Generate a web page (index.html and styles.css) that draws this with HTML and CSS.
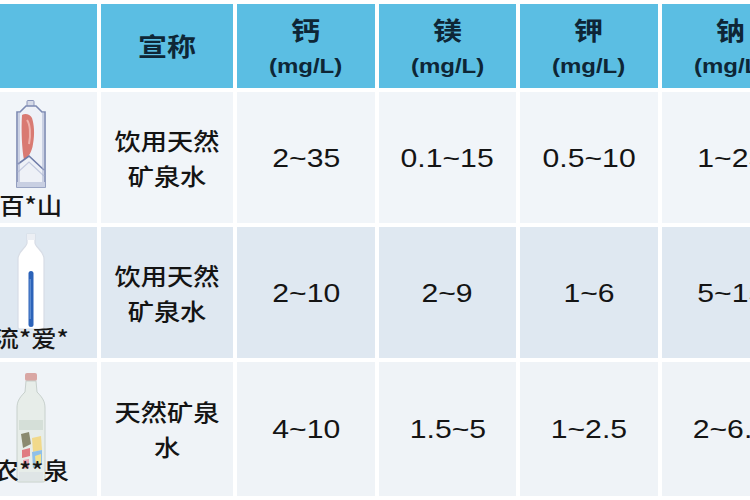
FILE: index.html
```html
<!DOCTYPE html>
<html lang="zh">
<head>
<meta charset="utf-8">
<title>矿泉水对比</title>
<link rel="stylesheet" href="styles.css">
</head>
<body>
<div class="table">
  <div class="cell head"></div>
  <div class="cell head"><span class="t h-main">宣称</span></div>
  <div class="cell head"><span class="t h-main">钙</span><span class="t h-unit">(mg/L)</span></div>
  <div class="cell head"><span class="t h-main">镁</span><span class="t h-unit">(mg/L)</span></div>
  <div class="cell head"><span class="t h-main">钾</span><span class="t h-unit">(mg/L)</span></div>
  <div class="cell head"><span class="t h-main">钠</span><span class="t h-unit">(mg/L)</span></div>

  <div class="cell brand r1 b1">
    <svg class="bottle" width="32" height="88" viewBox="0 0 32 88">
      <rect x="12" y="0.5" width="7" height="6" rx="1" fill="#d6dbe8" stroke="#8c96ba"/>
      <path d="M11 6 L5 12 L2 12 L2 87 L30 87 L30 12 L27 12 L21 6 Z" fill="#eef1f7" stroke="#7d8ab2" stroke-width="1.6"/>
      <path d="M7 15 C10 13 15 14 17 18 C19 24 20 34 18 44 C17 52 13 58 9 60 C7 50 6 30 7 15 Z" fill="#d97a72"/>
      <path d="M12 20 C15 24 16 34 14 44" stroke="#efb3ad" stroke-width="2" fill="none"/>
      <path d="M3 64 L14 56 L29 70" stroke="#6f7ca8" stroke-width="1.6" fill="none"/>
      <path d="M3 72 L14 62 L29 76" stroke="#c3cadf" stroke-width="1.2" fill="none"/>
      <path d="M4 12 L4 86 M28 12 L28 86" stroke="#a7b0cf" stroke-width="1" fill="none"/>
      <rect x="2" y="82" width="28" height="5" fill="#c8cfe2"/>
    </svg>
    <span class="t label">百*山</span>
  </div>
  <div class="cell body r1"><span class="t txt">饮用天然<br>矿泉水</span></div>
  <div class="cell body r1"><span class="t num">2~35</span></div>
  <div class="cell body r1"><span class="t num">0.1~15</span></div>
  <div class="cell body r1"><span class="t num">0.5~10</span></div>
  <div class="cell body r1"><span class="t num">1~25</span></div>

  <div class="cell brand r2 b2">
    <svg class="bottle" width="28" height="97" viewBox="0 0 28 97">
      <path d="M10 1 L18 1 L18 10 C18 14 27 18 27 26 L27 94 C27 96 26 96 24 96 L4 96 C2 96 1 96 1 94 L1 26 C1 18 10 14 10 10 Z" fill="#ffffff" stroke="#d8dde6" stroke-width="1.2"/>
      <rect x="10" y="1" width="8" height="6" fill="#eceff4"/>
      <rect x="11.5" y="38" width="5" height="56" rx="2.5" fill="#2c63b9"/>
      <rect x="12.5" y="46" width="1.5" height="40" fill="#5a8ad0"/>
    </svg>
    <span class="t label">流*爱*</span>
  </div>
  <div class="cell body r2"><span class="t txt">饮用天然<br>矿泉水</span></div>
  <div class="cell body r2"><span class="t num">2~10</span></div>
  <div class="cell body r2"><span class="t num">2~9</span></div>
  <div class="cell body r2"><span class="t num">1~6</span></div>
  <div class="cell body r2"><span class="t num">5~15</span></div>

  <div class="cell brand r3 b3">
    <svg class="bottle" width="32" height="111" viewBox="0 0 32 111">
      <rect x="10" y="1" width="12" height="8" rx="2" fill="#d9a7a4"/>
      <path d="M11 9 L21 9 L22 20 C28 26 30 30 30 36 L30 108 C30 110 29 110 27 110 L5 110 C3 110 2 110 2 108 L2 36 C2 30 4 26 10 20 Z" fill="#e7ede9" stroke="#c7d0cc" stroke-width="1"/>
      <rect x="4" y="48" width="24" height="10" fill="#d5dfd8"/>
      <path d="M6 62 L14 60 L16 72 L8 76 Z" fill="#8b8a70"/>
      <path d="M7 78 L15 76 L15 84 L7 86 Z" fill="#e07c82"/>
      <path d="M8 88 L14 87 L14 96 L8 97 Z" fill="#eaa0b0"/>
      <path d="M17 66 L26 64 L27 78 L18 80 Z" fill="#f1d98a"/>
      <path d="M17 80 L27 78 L27 92 L18 96 Z" fill="#8fc0e8"/>
      <path d="M20 84 L26 82 L26 92 L21 94 Z" fill="#f3e28c"/>
      <rect x="4" y="100" width="24" height="9" fill="#dfe5e6"/>
    </svg>
    <span class="t label">农**泉</span>
  </div>
  <div class="cell body r3"><span class="t txt">天然矿泉<br>水</span></div>
  <div class="cell body r3"><span class="t num">4~10</span></div>
  <div class="cell body r3"><span class="t num">1.5~5</span></div>
  <div class="cell body r3"><span class="t num">1~2.5</span></div>
  <div class="cell body r3"><span class="t num">2~6.5</span></div>
</div>
</body>
</html>
```

FILE: styles.css
```css
html, body {
  margin: 0;
  padding: 0;
  background: #ffffff;
  overflow: hidden;
  width: 750px;
  height: 500px;
}

.table {
  display: grid;
  grid-template-columns: 132px 132px 138px 137px 138px 138px;
  grid-template-rows: 84px 131px 131px 134px;
  gap: 4px;
  margin-left: -35px;
  padding-top: 4px;
  width: max-content;
  font-family: "Liberation Sans", "Noto Sans CJK SC", sans-serif;
}

.cell {
  display: flex;
  flex-direction: column;
  align-items: center;
  justify-content: center;
  overflow: hidden;
}

.t {
  display: inline-block;
  transform: scaleX(1.16);
  white-space: nowrap;
}

.head {
  background: #5bbee3;
  color: #0e2636;
  font-weight: bold;
  padding-top: 2px;
  box-sizing: border-box;
}

.h-main {
  font-size: 25px;
  line-height: 38px;
}

.h-unit {
  font-size: 20px;
  line-height: 32px;
  transform: scaleX(1.2);
}

.r1 { background: #f1f5f9; }
.r2 { background: #dfe8f1; }
.r3 { background: #eff3f7; }

.body {
  color: #141414;
}

.txt {
  font-size: 23px;
  line-height: 35px;
  text-align: center;
  font-family: "Noto Sans CJK SC", sans-serif;
  font-weight: 500;
  transform: scaleX(1.14);
}

.num {
  font-size: 26px;
  line-height: 30px;
}

.brand {
  justify-content: flex-start;
}

.bottle {
  display: block;
}

.label {
  position: relative;
  font-family: "Noto Sans CJK SC", sans-serif;
  font-weight: 500;
  font-size: 23px;
  line-height: 26px;
  color: #161616;
  transform: scaleX(1.1);
}

.b1 { padding-top: 8px; }
.b1 .label { margin-top: 3px; }

.b2 { padding-top: 6px; }
.b2 .label { margin-top: -6px; }

.b3 { padding-top: 10px; }
.b3 .label { margin-top: -27px; }
```
